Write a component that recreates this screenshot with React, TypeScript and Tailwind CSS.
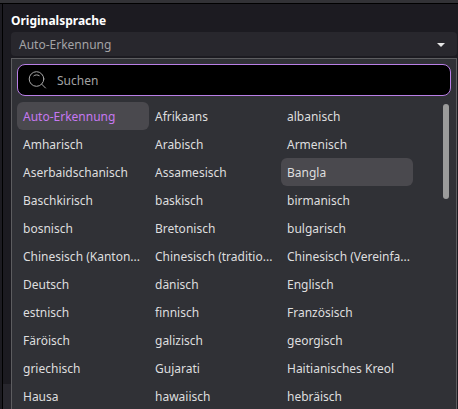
import { useState } from 'react';
import clsx from 'clsx';

const LANGUAGES = [
  'Auto-Erkennung', 'Afrikaans', 'albanisch',
  'Amharisch', 'Arabisch', 'Armenisch',
  'Aserbaidschanisch', 'Assamesisch', 'Bangla',
  'Baschkirisch', 'baskisch', 'birmanisch',
  'bosnisch', 'Bretonisch', 'bulgarisch',
  'Chinesisch (Kanton...', 'Chinesisch (traditio...', 'Chinesisch (Vereinfa...',
  'Deutsch', 'dänisch', 'Englisch',
  'estnisch', 'finnisch', 'Französisch',
  'Färöisch', 'galizisch', 'georgisch',
  'griechisch', 'Gujarati', 'Haitianisches Kreol',
  'Hausa', 'hawaiisch', 'hebräisch',
];

function SearchIcon() {
  return (
    <svg viewBox="0 0 20 20" className="size-5 shrink-0" fill="none" stroke="#a9a9a9" strokeLinecap="round" aria-hidden="true">
      <circle cx="8.5" cy="9" r="7.3" />
      <path d="M13.8 14.3 17.5 18" />
      <path d="M5.8 5.8C7 4.7 9.6 4.5 11.2 5.6" />
    </svg>
  );
}

export default function App() {
  const [selected, setSelected] = useState('Auto-Erkennung');
  const [active, setActive] = useState('Bangla');
  const [query, setQuery] = useState('');
  const [open, setOpen] = useState(true);

  const visible = LANGUAGES.filter((l) => l.toLowerCase().includes(query.toLowerCase()));

  return (
    <div className="flex h-screen flex-col overflow-hidden bg-[#1c1b21] font-['Noto_Sans',sans-serif] text-[12px]">
      <div className="h-1 shrink-0 border-b border-black bg-[#323236]" />
      <div className="flex min-h-0 flex-1">
        <div className="w-[3px] shrink-0 border-r border-black" />
        <div className="flex w-2 shrink-0 flex-col justify-end">
          <div className="h-[25px] bg-[#28272e]" />
        </div>
        <main className="min-w-0 flex-1 pt-2 pr-px">
          <label htmlFor="language" className="block h-5 pt-px leading-4 font-bold text-white">
            Originalsprache
          </label>
          <button
            id="language"
            type="button"
            aria-haspopup="listbox"
            aria-expanded={open}
            onClick={() => setOpen(!open)}
            className="flex h-6 w-full items-center justify-between rounded bg-[#28272d] pt-px pr-3 pl-2 text-[#a3a3a5]"
          >
            <span>{selected}</span>
            <svg viewBox="0 0 8 4" className="h-1 w-2" fill="#e6e6e6" aria-hidden="true">
              <path d="M0 0h8L4 4z" />
            </svg>
          </button>

          {open && (
            <div className="mt-0.5 border border-[#5d5d60] bg-[#303136] p-[5px]">
              <div className="flex h-8 items-center gap-[9px] rounded-lg border border-[#b87ee6] bg-black px-2.5">
                <SearchIcon />
                <input
                  type="text"
                  aria-label="Suchen"
                  placeholder="Suchen"
                  value={query}
                  onChange={(e) => setQuery(e.target.value)}
                  className="min-w-0 flex-1 bg-transparent pt-0.5 text-[#c9c9c9] outline-none placeholder:text-[#a3a3a3]"
                />
              </div>
              <div className="mt-1.5 flex items-start justify-between pr-0.5">
                <div role="listbox" aria-label="Originalsprache" className="mr-[30px] grid min-w-0 flex-1 grid-cols-3">
                  {visible.map((name) => (
                    <button
                      key={name}
                      type="button"
                      role="option"
                      aria-selected={name === selected}
                      onMouseEnter={() => setActive(name)}
                      onClick={() => setSelected(name)}
                      className={clsx(
                        'h-7 overflow-hidden rounded-md pt-0.5 pl-1.5 text-left whitespace-nowrap',
                        name === selected ? 'text-[#c678f0]' : 'text-[#dededf]',
                        (name === selected || name === active) && 'bg-[#4a494e]',
                      )}
                    >
                      {name}
                    </button>
                  ))}
                </div>
                <div className="mt-0.5 h-[95px] w-1.5 shrink-0 rounded-full bg-[#9b9b9b]" />
              </div>
            </div>
          )}
        </main>
      </div>
    </div>
  );
}
